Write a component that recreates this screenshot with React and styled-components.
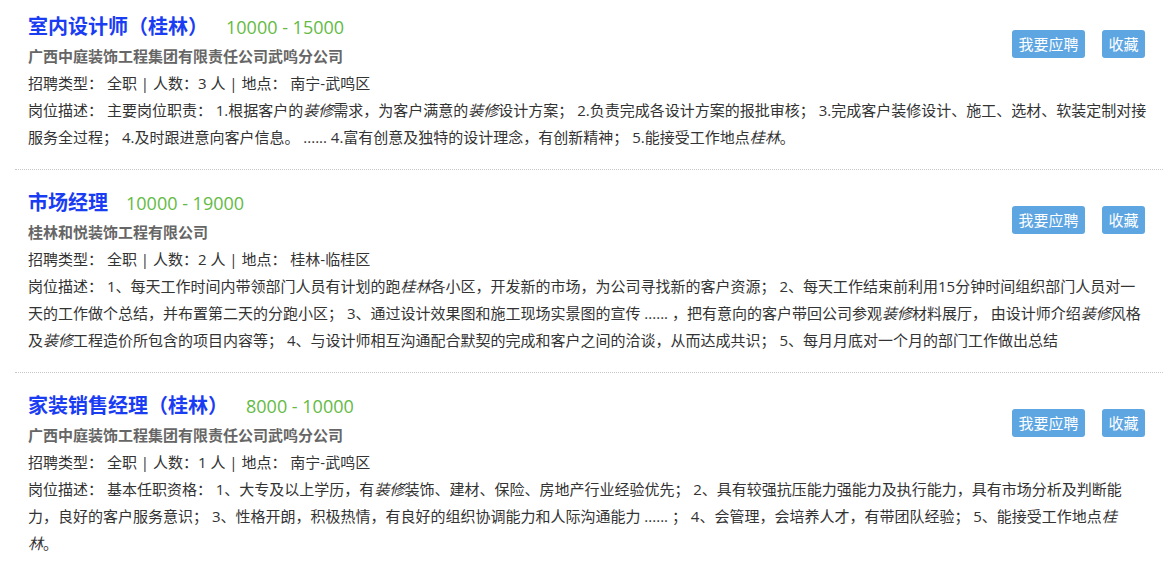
import React from "react";
import styled, { createGlobalStyle } from "styled-components";

const GlobalStyle = createGlobalStyle`
  html, body {
    margin: 0;
    padding: 0;
    background: #ffffff;
  }
  body {
    font-family: "Open Sans", "Noto Sans CJK SC", sans-serif;
    color: #333333;
  }
`;

const List = styled.div`
  width: 1148px;
  padding-left: 15px;
`;

const Item = styled.div`
  padding: 18px 15px 18px 13px;
  border-bottom: 1px dotted #c8c8c8;
  &:first-child {
    padding-top: 12px;
  }
`;

const Actions = styled.div`
  float: right;
  display: flex;
  gap: 17px;
  margin: 18px 3px 0 0;
`;

const ActionButton = styled.button`
  height: 28px;
  padding: 0 6.5px;
  border: none;
  border-radius: 3px;
  background: #5ea6e2;
  color: #ffffff;
  font-family: inherit;
  font-size: 15px;
  line-height: 28px;
  cursor: pointer;
`;

const TitleRow = styled.div`
  line-height: 29px;
  white-space: nowrap;
`;

const JobTitle = styled.a`
  font-size: 20px;
  font-weight: bold;
  color: #1a3cf2;
  text-decoration: none;
`;

const Salary = styled.span`
  font-size: 18px;
  color: #64ba45;
  margin-left: 18px;
`;

const Company = styled.div`
  font-size: 15px;
  font-weight: bold;
  color: #666666;
  line-height: 27px;
`;

const Line = styled.div`
  font-size: 15px;
  line-height: 27px;
  color: #333333;
`;

const Hl = styled.em`
  font-style: italic;
`;

const jobs = [
  {
    title: "室内设计师（桂林）",
    salary: "10000 - 15000",
    company: "广西中庭装饰工程集团有限责任公司武鸣分公司",
    count: 3,
    place: "南宁-武鸣区",
    desc: (
      <>
        岗位描述： 主要岗位职责： 1.根据客户的<Hl>装修</Hl>需求，为客户满意的<Hl>装修</Hl>设计方案； 2.负责完成各设计方案的报批审核； 3.完成客户装修设计、施工、选材、软装定制对接服务全过程； 4.及时跟进意向客户信息。 ...... 4.富有创意及独特的设计理念，有创新精神； 5.能接受工作地点<Hl>桂林</Hl>。
      </>
    ),
  },
  {
    title: "市场经理",
    salary: "10000 - 19000",
    company: "桂林和悦装饰工程有限公司",
    count: 2,
    place: "桂林-临桂区",
    desc: (
      <>
        岗位描述： 1、每天工作时间内带领部门人员有计划的跑<Hl>桂林</Hl>各小区，开发新的市场，为公司寻找新的客户资源； 2、每天工作结束前利用15分钟时间组织部门人员对一天的工作做个总结，并布置第二天的分跑小区； 3、通过设计效果图和施工现场实景图的宣传 ...... ，把有意向的客户带回公司参观<Hl>装修</Hl>材料展厅， 由设计师介绍<Hl>装修</Hl>风格及<Hl>装修</Hl>工程造价所包含的项目内容等； 4、与设计师相互沟通配合默契的完成和客户之间的洽谈，从而达成共识； 5、每月月底对一个月的部门工作做出总结
      </>
    ),
  },
  {
    title: "家装销售经理（桂林）",
    salary: "8000 - 10000",
    company: "广西中庭装饰工程集团有限责任公司武鸣分公司",
    count: 1,
    place: "南宁-武鸣区",
    desc: (
      <>
        岗位描述： 基本任职资格： 1、大专及以上学历，有<Hl>装修</Hl>装饰、建材、保险、房地产行业经验优先； 2、具有较强抗压能力强能力及执行能力，具有市场分析及判断能力，良好的客户服务意识； 3、性格开朗，积极热情，有良好的组织协调能力和人际沟通能力 ...... ； 4、会管理，会培养人才，有带团队经验； 5、能接受工作地点<Hl>桂<br />林</Hl>。
      </>
    ),
  },
];

export default function App() {
  return (
    <>
      <GlobalStyle />
      <List>
        {jobs.map((job, i) => (
          <Item key={i}>
            <Actions>
              <ActionButton>我要应聘</ActionButton>
              <ActionButton>收藏</ActionButton>
            </Actions>
            <TitleRow>
              <JobTitle href="#">{job.title}</JobTitle>
              <Salary>{job.salary}</Salary>
            </TitleRow>
            <Company>{job.company}</Company>
            <Line>
              招聘类型： 全职 | 人数：{job.count} 人 | 地点： {job.place}
            </Line>
            <Line>{job.desc}</Line>
          </Item>
        ))}
      </List>
    </>
  );
}
